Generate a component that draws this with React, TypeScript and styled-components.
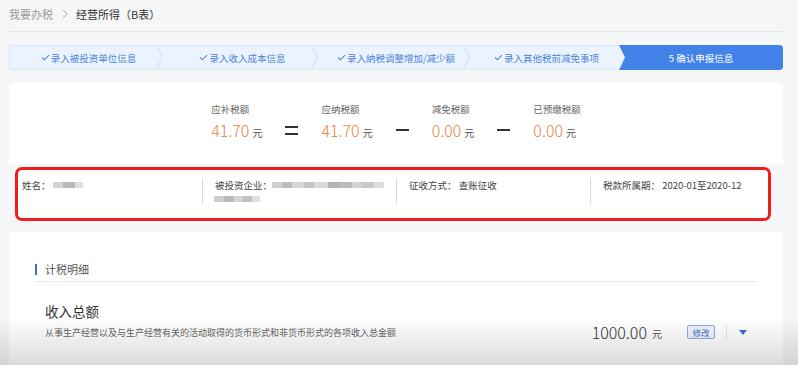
import React from "react";
import styled, { createGlobalStyle } from "styled-components";

const GlobalStyle = createGlobalStyle`
  html, body { margin: 0; padding: 0; }
  body {
    background: #f5f6f8;
    font-family: "Noto Sans CJK SC", "Noto Sans", sans-serif;
    color: #333;
    overflow: hidden;
  }
`;

const Page = styled.div`
  width: 774px;
  margin-left: 9px;
  height: 365px;
  overflow: hidden;
  display: flex;
  flex-direction: column;
`;

const Breadcrumb = styled.nav`
  flex: none;
  height: 28px;
  padding-bottom: 3px;
  border-bottom: 1px solid #e4e6e9;
  display: flex;
  align-items: center;
  font-size: 11px;
  line-height: 14px;
`;

const CrumbLink = styled.span`
  color: #9b9b9b;
`;

const CrumbCurrent = styled.span`
  color: #333;
`;

const CrumbSep = styled.svg`
  margin: 0 8px 0 9px;
`;

const StepBar = styled.div`
  flex: none;
  display: flex;
  height: 25px;
  margin-top: 13px;
  border-radius: 3px;
  background: #ebf4fe;
  overflow: hidden;
`;

const Step = styled.div<{ $w: number; $first?: boolean }>`
  position: relative;
  flex: 0 0 ${(p) => p.$w}px;
  box-sizing: border-box;
  display: flex;
  align-items: center;
  justify-content: center;
  gap: 1px;
  padding-left: 4px;
  border-top: 1px solid #d9e7f9;
  border-bottom: 1px solid #d9e7f9;
  border-left: ${(p) => (p.$first ? "1px solid #d9e7f9" : "none")};
  border-radius: ${(p) => (p.$first ? "3px 0 0 3px" : "0")};
  font-size: 9.5px;
  color: #4b83da;
  white-space: nowrap;
`;

const StepArrow = styled.svg`
  position: absolute;
  right: 0;
  top: 0;
`;

const ActiveStep = styled.div`
  flex: 1;
  display: flex;
  align-items: center;
  justify-content: center;
  background: #4282e9;
  color: #fff;
  font-size: 9.5px;
  border-radius: 0 3px 3px 0;
  clip-path: polygon(0 0, 100% 0, 100% 100%, 0 100%, 6px 50%);
  white-space: nowrap;
`;

const FormulaCard = styled.section`
  flex: none;
  margin-top: 13px;
  height: 81px;
  box-sizing: border-box;
  padding-top: 19px;
  background: #fff;
  display: flex;
  justify-content: center;
  align-items: flex-start;
  gap: 23px;
`;

const FormulaItem = styled.div`
  display: flex;
  flex-direction: column;
  gap: 5px;
`;

const FormulaLabel = styled.div`
  font-size: 9.5px;
  line-height: 14px;
  color: #666;
`;

const FormulaValue = styled.div`
  display: flex;
  align-items: baseline;
  line-height: 18px;
  height: 18px;
`;

const Amount = styled.span`
  font-size: 16px;
  font-weight: 300;
  color: #e9803f;
`;

const Unit = styled.span`
  font-size: 10px;
  color: #555;
  margin-left: 3px;
`;

const Operator = styled.div<{ $bars: number }>`
  margin-top: 19px;
  height: 18px;
  width: 13px;
  display: flex;
  flex-direction: column;
  justify-content: center;
  gap: ${(p) => (p.$bars > 1 ? "5px" : "0")};
`;

const OperatorBar = styled.span`
  display: block;
  height: 2px;
  background: #333;
`;

const InfoBox = styled.div`
  flex: none;
  margin: 3px 0 0 6px;
  width: 756px;
  height: 54px;
  box-sizing: border-box;
  border: 3px solid #f11d1d;
  border-radius: 7px;
  background: #fff;
  display: grid;
  grid-template-columns: 184px 194px 194px 1fr;
  padding-top: 8px;
`;

const InfoCell = styled.div`
  height: 26px;
  padding-left: 12px;
  font-size: 9.5px;
  line-height: 14px;
  color: #444;
  & + & {
    border-left: 1px solid #dadada;
  }
  &:first-child {
    padding-left: 4px;
  }
`;

const InfoLine = styled.div`
  display: flex;
  align-items: center;
  height: 14px;
  white-space: pre;
`;

const Redacted = styled.span<{ $ml?: number }>`
  display: inline-flex;
  height: 6px;
  margin-left: ${(p) => p.$ml ?? 0}px;
`;

const Pixel = styled.span<{ $c: string; $w: number }>`
  width: ${(p) => p.$w}px;
  background: ${(p) => p.$c};
`;

const DetailCard = styled.section`
  flex: 1;
  margin-top: 11px;
  background: #fff;
  padding: 0 26px;
`;

const SectionTitle = styled.div`
  display: flex;
  align-items: center;
  gap: 8px;
  padding: 30px 0 5px;
  line-height: 14px;
  font-size: 11px;
  color: #555;
  border-bottom: 1px solid #e8e9eb;
  &::before {
    content: "";
    width: 2px;
    height: 11px;
    background: #3a6fd8;
  }
`;

const Item = styled.div`
  padding: 19px 10px 0 10px;
`;

const ItemTitle = styled.div`
  font-size: 13.5px;
  line-height: 20px;
  color: #333;
`;

const ItemRow = styled.div`
  display: flex;
  align-items: center;
  margin-top: 2px;
  height: 18px;
`;

const Description = styled.div`
  flex: 1;
  font-size: 9px;
  color: #666;
  white-space: nowrap;
`;

const ItemAmount = styled.span`
  font-size: 16px;
  font-weight: 300;
  color: #333;
  line-height: 18px;
`;

const ItemUnit = styled.span`
  font-size: 10px;
  color: #555;
  margin-left: 5px;
  margin-top: 3px;
`;

const EditButton = styled.button`
  margin-left: 25px;
  width: 28px;
  height: 14px;
  padding: 0;
  box-sizing: border-box;
  border: 1px solid #8eabe0;
  border-radius: 2px;
  background: #eef3fc;
  color: #4a74c8;
  font-family: inherit;
  font-size: 8.5px;
  line-height: 12px;
`;

const Divider = styled.span`
  margin-left: 11px;
  width: 1px;
  height: 14px;
  background: #e3e3e3;
`;

const Caret = styled.svg`
  margin-left: 12px;
`;

const BottomShade = styled.div`
  position: fixed;
  left: 0;
  right: 0;
  bottom: 0;
  height: 48px;
  pointer-events: none;
  background: linear-gradient(to bottom, rgba(0, 0, 0, 0), rgba(0, 0, 0, 0.14));
`;

const Check = () => (
  <svg width="9" height="7" viewBox="0 0 9 7">
    <polyline points="1,3.4 3.4,5.8 8,1.2" fill="none" stroke="#4b83da" strokeWidth="1.1" />
  </svg>
);

const steps = [
  { w: 154, label: "录入被投资单位信息" },
  { w: 155, label: "录入收入成本信息" },
  { w: 152, label: "录入纳税调整增加/减少额" },
  { w: 149, label: "录入其他税前减免事项" },
];

const formula = [
  { label: "应补税额", value: "41.70" },
  { label: "应纳税额", value: "41.70" },
  { label: "减免税额", value: "0.00" },
  { label: "已预缴税额", value: "0.00" },
];

type Px = [string, number];

const blurName: Px[] = [
  ["#d3d3d3", 10],
  ["#b8b8b8", 12],
  ["#dedede", 8],
];
const blurCompany1: Px[] = [
  ["#cfcfcf", 10],
  ["#bdbdbd", 10],
  ["#d6d6d6", 12],
  ["#c4c4c4", 10],
  ["#d9d9d9", 14],
  ["#b4b4b4", 12],
  ["#bcbcbc", 12],
  ["#d2d2d2", 10],
  ["#c9c9c9", 12],
  ["#dcdcdc", 10],
];
const blurCompany2: Px[] = [
  ["#cdcdcd", 10],
  ["#b9b9b9", 10],
  ["#d4d4d4", 8],
  ["#c2c2c2", 10],
  ["#e0e0e0", 8],
];

const Blur = ({ px, ml }: { px: Px[]; ml?: number }) => (
  <Redacted $ml={ml}>
    {px.map(([c, w], i) => (
      <Pixel key={i} $c={c} $w={w} />
    ))}
  </Redacted>
);

export default function App() {
  return (
    <>
      <GlobalStyle />
      <Page>
        <Breadcrumb>
          <CrumbLink>我要办税</CrumbLink>
          <CrumbSep width="6" height="10" viewBox="0 0 6 10">
            <polyline points="1,1 5,5 1,9" fill="none" stroke="#a8a8a8" strokeWidth="1" />
          </CrumbSep>
          <CrumbCurrent>经营所得（B表）</CrumbCurrent>
        </Breadcrumb>

        <StepBar>
          {steps.map((s, i) => (
            <Step key={s.label} $w={s.w} $first={i === 0}>
              <Check />
              <span>{s.label}</span>
              {i < steps.length - 1 && (
                <StepArrow width="7" height="23" viewBox="0 0 7 23">
                  <polyline points="0.5,0 6.3,11.5 0.5,23" fill="none" stroke="#cadcf4" strokeWidth="1" />
                </StepArrow>
              )}
            </Step>
          ))}
          <ActiveStep>5 确认申报信息</ActiveStep>
        </StepBar>

        <FormulaCard>
          {formula.map((f, i) => (
            <React.Fragment key={f.label}>
              {i > 0 && (
                <Operator $bars={i === 1 ? 2 : 1}>
                  <OperatorBar />
                  {i === 1 && <OperatorBar />}
                </Operator>
              )}
              <FormulaItem>
                <FormulaLabel>{f.label}</FormulaLabel>
                <FormulaValue>
                  <Amount>{f.value}</Amount>
                  <Unit>元</Unit>
                </FormulaValue>
              </FormulaItem>
            </React.Fragment>
          ))}
        </FormulaCard>

        <InfoBox>
          <InfoCell>
            <InfoLine>
              姓名：
              <Blur px={blurName} ml={2} />
            </InfoLine>
          </InfoCell>
          <InfoCell>
            <InfoLine>
              被投资企业：
              <Blur px={blurCompany1} />
            </InfoLine>
            <InfoLine>
              <Blur px={blurCompany2} ml={-1} />
            </InfoLine>
          </InfoCell>
          <InfoCell>
            <InfoLine>征收方式： 查账征收</InfoLine>
          </InfoCell>
          <InfoCell>
            <InfoLine>税款所属期： 2020-01至2020-12</InfoLine>
          </InfoCell>
        </InfoBox>

        <DetailCard>
          <SectionTitle>计税明细</SectionTitle>
          <Item>
            <ItemTitle>收入总额</ItemTitle>
            <ItemRow>
              <Description>
                从事生产经营以及与生产经营有关的活动取得的货币形式和非货币形式的各项收入总金额
              </Description>
              <ItemAmount>1000.00</ItemAmount>
              <ItemUnit>元</ItemUnit>
              <EditButton>修改</EditButton>
              <Divider />
              <Caret width="8" height="5" viewBox="0 0 8 5">
                <polygon points="0,0 8,0 4,5" fill="#3a72dc" />
              </Caret>
            </ItemRow>
          </Item>
        </DetailCard>
      </Page>
      <BottomShade />
    </>
  );
}
